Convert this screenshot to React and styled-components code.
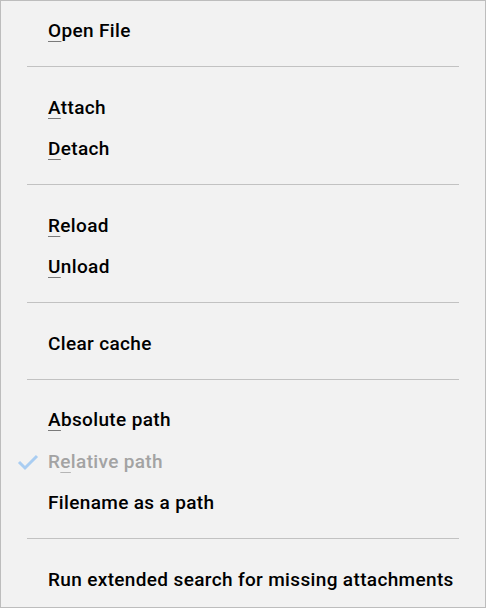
import styled, { createGlobalStyle } from "styled-components";

const GlobalStyle = createGlobalStyle`
  html, body {
    margin: 0;
    padding: 0;
    background: #f2f2f2;
  }
`;

const items = [
  [{ label: "Open File", key: 0 }],
  [{ label: "Attach", key: 0 }, { label: "Detach", key: 0 }],
  [{ label: "Reload", key: 0 }, { label: "Unload", key: 0 }],
  [{ label: "Clear cache" }],
  [
    { label: "Absolute path", key: 0 },
    { label: "Relative path", key: 1, checked: true, disabled: true },
    { label: "Filename as a path" },
  ],
  [{ label: "Run extended search for missing attachments" }],
];

const Menu = styled.div`
  box-sizing: border-box;
  width: 486px;
  height: 608px;
  background: #f2f2f2;
  border: 1px solid #bdbdbd;
  padding: 9px 0 0;
  font-family: Roboto, "Liberation Sans", sans-serif;
  font-weight: 500;
  font-size: 19px;
  letter-spacing: 0.35px;
  overflow: hidden;
`;

const Item = styled.div`
  position: relative;
  display: flex;
  align-items: center;
  height: 41.5px;
  padding-left: 47px;
  color: ${p => (p.disabled ? "#a3a3a3" : "#000")};
  white-space: nowrap;
`;

const Mnemonic = styled.span`
  text-decoration: underline;
  text-decoration-color: ${p => (p.disabled ? "#b5b5b5" : "#7a7a7a")};
  text-decoration-thickness: 1px;
  text-underline-offset: 4px;
`;

const Check = styled.svg`
  position: absolute;
  left: 16px;
  top: 12px;
`;

const Separator = styled.hr`
  border: none;
  border-top: 1px solid #c2c2c2;
  margin: 14.5px 26px 19.5px 26px;
  height: 0;
`;

function Label({ label, mn, disabled }) {
  if (mn === undefined) return <span>{label}</span>;
  return (
    <span>
      {label.slice(0, mn)}
      <Mnemonic disabled={disabled}>{label[mn]}</Mnemonic>
      {label.slice(mn + 1)}
    </span>
  );
}

export default function App() {
  return (
    <>
      <GlobalStyle />
      <Menu>
        {items.map((group, gi) => (
          <div key={gi}>
            {gi > 0 && <Separator />}
            {group.map(it => (
              <Item key={it.label} disabled={it.disabled}>
                {it.checked && (
                  <Check width="22" height="18" viewBox="0 0 22 18">
                    <polyline
                      points="2,9 8,15 20,3"
                      fill="none"
                      stroke="#a9cdf2"
                      strokeWidth="3"
                    />
                  </Check>
                )}
                <Label label={it.label} mn={it.key} disabled={it.disabled} />
              </Item>
            ))}
          </div>
        ))}
      </Menu>
    </>
  );
}
